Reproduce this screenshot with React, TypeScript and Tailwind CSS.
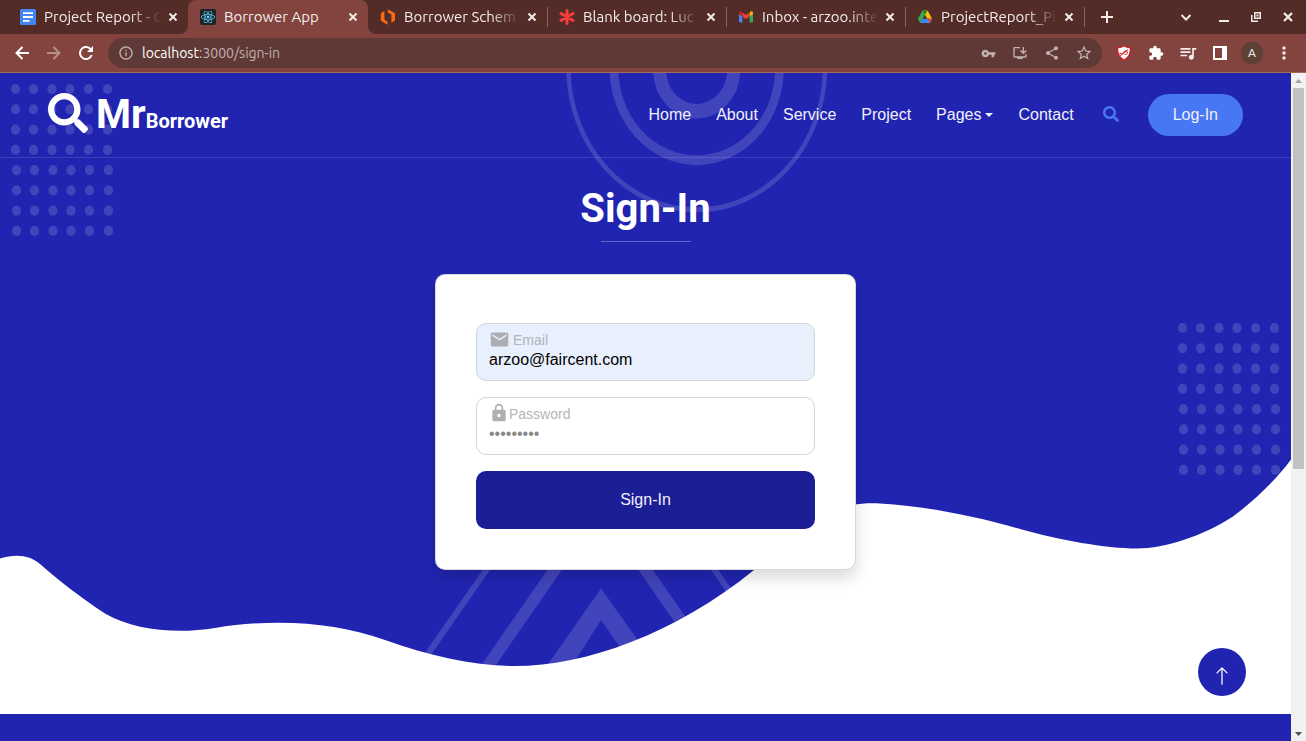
import type { ReactNode } from "react";
import {
  MdEmail,
  MdExtension,
  MdInfoOutline,
  MdInstallDesktop,
  MdLock,
  MdMoreVert,
  MdQueueMusic,
  MdShare,
  MdStarBorder,
  MdVpnKey,
} from "react-icons/md";
import { FaReact, FaSearch } from "react-icons/fa";
import { BsArrowUp } from "react-icons/bs";

const glyphs = {
  close: "M3.500 3.500l7 7M10.500 3.500l-7 7",
  add: "M7 1v12M1 7h12",
  chevron: "M2.500 5L7 9.500 11.500 5",
  back: "M14 7H1.500M7.500 1L1.500 7l6 6",
  forward: "M0 7h12.500M6.500 1l6 6-6 6",
};

function Glyph({ name, size = 14, className = "" }: { name: keyof typeof glyphs; size?: number; className?: string }) {
  return (
    <svg width={size} height={size} viewBox="0 0 14 14" className={className} aria-hidden="true">
      <path d={glyphs[name]} fill="none" stroke="currentColor" strokeWidth="2" />
    </svg>
  );
}

const ReloadIcon = () => (
  <svg width="14" height="14" viewBox="0 0 14 14" className="text-white" aria-hidden="true">
    <path d="M12.700 9A6 6 0 1 1 11.200 2.700L12.500 4" fill="none" stroke="currentColor" strokeWidth="2" />
    <path d="M14 0v6H8z" fill="currentColor" />
  </svg>
);

const DocsIcon = () => (
  <svg width="16" height="16" viewBox="0 0 16 16" aria-hidden="true">
    <rect width="16" height="16" rx="1.5" fill="#4285f4" />
    <path d="M3 3.3h10v1.8H3zM3 7.1h10v1.8H3zM3 10.9h6.5v1.8H3z" fill="#fff" />
  </svg>
);

const ReactIcon = () => (
  <span className="flex size-4 items-center justify-center rounded-xs bg-[#20232a] text-[#61dafb]">
    <FaReact size={14} />
  </span>
);

const LucidIcon = () => (
  <svg width="16" height="16" viewBox="0 0 16 16" aria-hidden="true">
    <path d="M.8 4.2L4.400 2v8.600l3.200 2.200v3L.8 11.800z" fill="#f96b13" />
    <path d="M7.800.2l7.200 4v7.400l-3.600 2.200V5.600L7.800 3.400z" fill="#f96b13" />
  </svg>
);

const SparkIcon = () => (
  <svg width="16" height="16" viewBox="0 0 16 16" aria-hidden="true">
    <path
      d="M8 1.5v13M2 4.500l12 7M14 4.500L2 11.500"
      stroke="#fa3c3c"
      strokeWidth="3"
      strokeLinecap="round"
    />
  </svg>
);

const GmailIcon = () => (
  <svg width="16" height="16" viewBox="0 0 16 16" aria-hidden="true">
    <path d="M1 5v7.6c0 .5.4.9.9.9H4.400V7.300z" fill="#4285f4" />
    <path d="M15 5v7.6c0 .5-.4.9-.9.9H11.600V7.300z" fill="#34a853" />
    <path d="M11.600 4v3.600L15 5V3.900c0-1.300-1.500-2-2.500-1.200z" fill="#fbbc04" />
    <path d="M1 5l3.400 2.600V4l-.9-1.300C2.500 1.900 1 2.600 1 3.900z" fill="#c5221f" />
    <path d="M4.400 7.600V3.400L8 6.100l3.600-2.700v4.200L8 10.300z" fill="#ea4335" />
  </svg>
);

const DriveIcon = () => (
  <svg width="16" height="16" viewBox="0 0 16 16" aria-hidden="true">
    <path d="M5.500 1.500L.8 9.800l2.300 4.100L8 5.700z" fill="#34a853" />
    <path d="M5.500 1.500h5l4.700 8.300h-4.900z" fill="#fbbc04" />
    <path d="M5.500 9.800h9.700l-2.300 4.100H3.100z" fill="#4285f4" />
    <path d="M10.300 9.800h4.900l-2.300 4.100z" fill="#ea4335" />
    <path d="M5.500 1.500h5L8 5.700z" fill="#188038" />
  </svg>
);

const ShieldIcon = () => (
  <svg width="16" height="16" viewBox="0 0 16 16" aria-hidden="true">
    <path
      d="M8 .8c2 1.500 4 2 6.500 2 0 6-1.200 9.400-6.500 12.600C2.700 12.200 1.500 8.800 1.500 2.800 4 2.800 6 2.300 8 .8z"
      fill="#fff"
      stroke="#d3191c"
      strokeWidth="1.300"
    />
    <path
      d="M4 9.200V7.800c1 1.600 2.800 1 3.300-.3s2.400-2.300 4-.8v1.800c-1 1.500-2.800 1.300-3.400.2M4 11.200l8-6.700"
      fill="none"
      stroke="#d3191c"
      strokeWidth="1"
    />
  </svg>
);

type TabInfo = { title: string; icon: ReactNode; active?: boolean; width: string; separator?: boolean };

const tabs: TabInfo[] = [
  { title: "Project Report - G", icon: <DocsIcon />, width: "w-[180px]" },
  { title: "Borrower App", icon: <ReactIcon />, width: "w-[180px]", active: true },
  { title: "Borrower Schem", icon: <LucidIcon />, width: "w-[179px]", separator: true },
  { title: "Blank board: Luc", icon: <SparkIcon />, width: "w-[179px]", separator: true },
  { title: "Inbox - arzoo.inte", icon: <GmailIcon />, width: "w-[179px]", separator: true },
  { title: "ProjectReport_Pi", icon: <DriveIcon />, width: "w-[179px]", separator: true },
];

function Tab({ title, icon, active, width, separator }: TabInfo) {
  return (
    <div
      className={`relative flex h-full items-center pr-[7px] pl-3 ${width} ${
        active ? "rounded-t-lg bg-[#83443f]" : ""
      }`}
    >
      {active && (
        <>
          <span className="absolute bottom-0 -left-2 size-2 bg-[#83443f]">
            <span className="block size-2 rounded-br-lg bg-[#532c28]" />
          </span>
          <span className="absolute -right-2 bottom-0 size-2 bg-[#83443f]">
            <span className="block size-2 rounded-bl-lg bg-[#532c28]" />
          </span>
        </>
      )}
      <span className="shrink-0">{icon}</span>
      <span
        className={`ml-2 min-w-0 flex-1 overflow-hidden whitespace-nowrap ${
          active ? "" : "[mask-image:linear-gradient(to_right,black_72%,transparent_97%)]"
        }`}
      >
        {title}
      </span>
      <button type="button" aria-label={`Close ${title}`} className="flex size-4 items-center justify-center">
        <Glyph name="close" />
      </button>
      {separator && <span className="absolute -right-px h-5 w-px bg-[#83635d]" />}
    </div>
  );
}

function IconButton({ label, children }: { label: string; children: ReactNode }) {
  return (
    <button type="button" aria-label={label} className="flex h-8 w-8 shrink-0 items-center justify-center">
      {children}
    </button>
  );
}

function BrowserChrome() {
  return (
    <div className="shrink-0 border-b border-[#a26b5d] bg-[#83443f] font-['Ubuntu','Noto_Sans',sans-serif] text-sm text-[#f3eceb]">
      <div className="flex h-[34px] items-center bg-[#532c28] pl-2 text-[15px]">
        {tabs.map((tab) => (
          <Tab key={tab.title} {...tab} />
        ))}
        <button type="button" aria-label="New tab" className="ml-[13px] flex size-5 items-center justify-center">
          <Glyph name="add" />
        </button>
        <div className="ml-auto flex items-center pr-0.5">
          <button type="button" aria-label="Search tabs" className="mr-1.5 flex w-8 justify-center">
            <Glyph name="chevron" />
          </button>
          <IconButton label="Minimize">
            <svg width="10" height="10" viewBox="0 0 10 10" aria-hidden="true">
              <path d="M0 8h10v2H0z" fill="currentColor" />
            </svg>
          </IconButton>
          <IconButton label="Restore">
            <svg width="10" height="10" viewBox="0 0 10 10" aria-hidden="true">
              <path d="M3 0h7v7H3zM4.500 1.500v4h4v-4z" fill="currentColor" fillRule="evenodd" />
              <path d="M.75 3v6.250H7" fill="none" stroke="currentColor" strokeWidth="1.500" />
              <path d="M5.500 2.500h2v2h-2z" fill="currentColor" />
            </svg>
          </IconButton>
          <IconButton label="Close window">
            <Glyph name="close" size={16} />
          </IconButton>
        </div>
      </div>
      <div className="flex h-[38px] items-center pr-1.5 pl-1.5">
        <IconButton label="Back">
          <Glyph name="back" className="text-white" />
        </IconButton>
        <IconButton label="Forward">
          <Glyph name="forward" className="text-[#b98f8c]" />
        </IconButton>
        <IconButton label="Reload">
          <ReloadIcon />
        </IconButton>
        <div className="mr-1.5 ml-1.5 flex h-[30px] min-w-0 flex-1 items-center rounded-full bg-[#5f3935] pr-0.5 pl-2.5 text-[#c3b2b0]">
          <MdInfoOutline size={16} className="shrink-0" />
          <span className="ml-2 flex-1 truncate">
            <span className="text-white">localhost</span>:3000/sign-in
          </span>
          <IconButton label="Passwords">
            <MdVpnKey size={15} />
          </IconButton>
          <IconButton label="Install app">
            <MdInstallDesktop size={16} />
          </IconButton>
          <IconButton label="Share">
            <MdShare size={16} />
          </IconButton>
          <IconButton label="Bookmark">
            <MdStarBorder size={18} />
          </IconButton>
        </div>
        <IconButton label="Content blocker">
          <ShieldIcon />
        </IconButton>
        <IconButton label="Extensions">
          <MdExtension size={16} className="text-white" />
        </IconButton>
        <IconButton label="Media">
          <MdQueueMusic size={20} />
        </IconButton>
        <IconButton label="Side panel">
          <svg width="14" height="14" viewBox="0 0 14 14" aria-hidden="true">
            <path d="M0 0h14v14H0zM2 2v10h7V2z" fill="#fff" fillRule="evenodd" />
          </svg>
        </IconButton>
        <IconButton label="Profile">
          <span className="flex size-[22px] items-center justify-center rounded-full bg-[#5b4036] text-xs text-white">
            A
          </span>
        </IconButton>
        <IconButton label="Menu">
          <MdMoreVert size={20} />
        </IconButton>
      </div>
    </div>
  );
}

const dotColumns = [0, 18, 36.500, 54.500, 73, 92];

function Dots({ x, y }: { x: number; y: number }) {
  return (
    <>
      {Array.from({ length: 8 }, (_, row) =>
        dotColumns.map((dx) => (
          <ellipse
            key={`${row}-${dx}`}
            cx={x + dx + (row > 3 ? 1 : 0)}
            cy={y + row * 20.270}
            rx="4.600"
            ry="5.100"
          />
        )),
      )}
    </>
  );
}

function HeroBackdrop() {
  return (
    <svg
      className="absolute inset-0 h-full w-full"
      viewBox="0 73 1291 593"
      preserveAspectRatio="none"
      aria-hidden="true"
    >
      <g fill="#fff" fillOpacity="0.150">
        <Dots x={15.500} y={89} />
        <Dots x={1182.500} y={328} />
        <path fillRule="evenodd" d="M601 588.500L537 680h26L601 620l42 60h23z" />
        <path fillRule="evenodd" d="M600 494L471 680h14.500L600 515l115 165h14.500z" />
        <path fillRule="evenodd" d="M600.500 401L406 680h7.500L600.500 411l187 269h7.500z" />
      </g>
      <g
        transform="translate(696.700 68.500) scale(1 1.110)"
        fill="none"
        stroke="#fff"
        strokeOpacity="0.150"
      >
        <circle cy="-1" r="128.300" strokeWidth="4.500" />
        <circle r="82.700" strokeWidth="8.700" />
        <circle cy="1.500" r="37" strokeWidth="13" />
      </g>
      <path
        fill="#fff"
        d="M0 558.500C16 553.500 30 555 40 564C62 583 80 597 105 613.500C135 631 178 634 215 628C275 618 335 622 385 640C430 656 475 666 515 666C585 666 675 634 754 570C790 538 820 500 880 503.500C925 506 975 516 1020 529C1060 540 1105 548.500 1137 548.500C1165 548.500 1203 536 1233 516.500C1255 500 1275 481 1291 459.500V667H0z"
      />
    </svg>
  );
}

const navLinks = ["Home", "About", "Service", "Project", "Pages", "Contact"];

function Header() {
  return (
    <header className="flex h-[85px] items-center justify-between border-b border-white/12 px-12">
      <a href="#home" className="flex h-12 items-center gap-2 font-['Roboto',sans-serif] font-bold">
        <FaSearch size={40} className="mb-1" />
        <span className="text-[40px] leading-12">
          Mr<span className="text-xl">Borrower</span>
        </span>
      </a>
      <nav className="flex items-center">
        <ul className="flex gap-[25px] text-[#f0f0fa]">
          {navLinks.map((link) => (
            <li key={link}>
              <a href={`#${link.toLowerCase()}`} className="flex items-center gap-1">
                {link}
                {link === "Pages" && (
                  <svg width="8" height="4" viewBox="0 0 8 4" fill="currentColor" aria-hidden="true">
                    <path d="M0 0h8L4 4z" />
                  </svg>
                )}
              </a>
            </li>
          ))}
        </ul>
        <button type="button" aria-label="Search" className="mr-[29px] mb-0.5 ml-[29px] text-[#4777f5]">
          <FaSearch size={16} />
        </button>
        <a
          href="#login"
          className="flex h-[42px] items-center rounded-full bg-[#4777f5] px-[25px] text-[#f0f0fa]"
        >
          Log-In
        </a>
      </nav>
    </header>
  );
}

function SignInForm() {
  const field = "h-[58px] w-full rounded-[10px] border border-[#ced4da] px-3 pt-[26px] pb-[10px] outline-none";
  return (
    <form
      className="mx-auto mt-8 w-full max-w-[421px] space-y-4 rounded-[10px] border border-black/15 bg-white bg-clip-border px-10 pt-12 pb-10 text-black shadow-[0_8px_16px_rgba(0,0,0,0.15)]"
      onSubmit={(event) => event.preventDefault()}
    >
      <div className="relative">
        <input
          id="email"
          type="email"
          defaultValue="arzoo@faircent.com"
          className={`${field} bg-[#e8f0fe]`}
        />
        <label htmlFor="email" className="absolute top-[5px] left-[13px] flex items-center gap-[3px] text-sm text-[#b0b2b8]">
          <MdEmail size={21} className="text-[#acacb2]" />
          <span className="pt-0.5">Email</span>
        </label>
      </div>
      <div className="relative">
        <input
          id="password"
          type="password"
          defaultValue="password1"
          className={`${field} bg-white text-[#888]`}
        />
        <label htmlFor="password" className="absolute top-[5px] left-[13px] flex items-center text-sm text-[#b5b5b5]">
          <MdLock size={20} className="text-[#b0b0b0]" />
          <span className="pt-0.5">Password</span>
        </label>
      </div>
      <button type="submit" className="h-[58px] w-full rounded-[10px] bg-[#1c1e96] text-[#f0f0fa]">
        Sign-In
      </button>
    </form>
  );
}

function Scrollbar() {
  return (
    <div className="flex w-[15px] shrink-0 flex-col items-center bg-[#f1f1f1]" aria-hidden="true">
      <div className="flex h-[15px] items-center">
        <svg width="7" height="4" viewBox="0 0 7 4" fill="#a3a3a3">
          <path d="M0 4L3.500 0L7 4z" />
        </svg>
      </div>
      <div className="h-[57%] w-[11px] bg-[#c1c1c1]" />
      <div className="mt-auto flex h-[15px] items-center">
        <svg width="7" height="4" viewBox="0 0 7 4" fill="#505050">
          <path d="M0 0h7L3.500 4z" />
        </svg>
      </div>
    </div>
  );
}

export default function App() {
  return (
    <div className="flex h-screen flex-col overflow-hidden font-['Liberation_Sans',Arial,sans-serif] text-base">
      <BrowserChrome />
      <div className="flex min-h-0 flex-1">
        <div className="relative flex min-w-0 flex-1 flex-col overflow-hidden bg-white">
          <main className="relative mb-12 shrink-0 bg-[#2124b1] pb-24 text-white">
            <HeroBackdrop />
            <div className="relative">
              <Header />
              <div className="pt-[27px] text-center">
                <h1 className="font-['Roboto',sans-serif] text-[40px] leading-12 font-bold">Sign-In</h1>
                <div className="mx-auto mt-2 h-px w-[90px] bg-white/30" />
              </div>
              <SignInForm />
            </div>
          </main>
          <footer className="flex-1 bg-[#2124b1]" />
          <a
            href="#top"
            aria-label="Back to top"
            className="absolute right-[45px] bottom-[45px] flex size-12 items-center justify-center rounded-full bg-[#2124b1] pt-2 text-white"
          >
            <BsArrowUp size={20} />
          </a>
        </div>
        <Scrollbar />
      </div>
    </div>
  );
}
